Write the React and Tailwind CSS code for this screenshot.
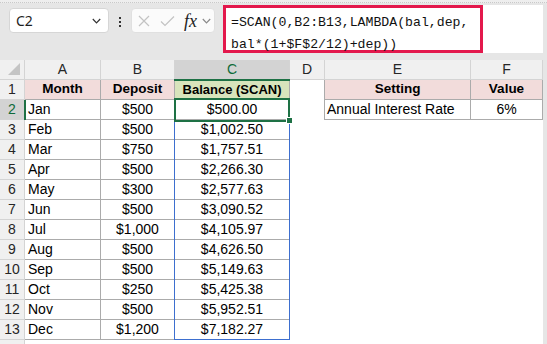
import React from "react";

const rows = [
  ["Jan", "$500", "$500.00"],
  ["Feb", "$500", "$1,002.50"],
  ["Mar", "$750", "$1,757.51"],
  ["Apr", "$500", "$2,266.30"],
  ["May", "$300", "$2,577.63"],
  ["Jun", "$500", "$3,090.52"],
  ["Jul", "$1,000", "$4,105.97"],
  ["Aug", "$500", "$4,626.50"],
  ["Sep", "$500", "$5,149.63"],
  ["Oct", "$250", "$5,425.38"],
  ["Nov", "$500", "$5,952.51"],
  ["Dec", "$1,200", "$7,182.27"],
];

function Chevron({ className }) {
  return (
    <svg width="9" height="6" viewBox="0 0 9 6" className={className}>
      <path d="M0.8 1 L4.5 4.8 L8.2 1" fill="none" stroke="currentColor" strokeWidth="1.2" />
    </svg>
  );
}

function ColHead({ label, sel }) {
  return (
    <div
      className={
        "h-[20px] border-r border-b border-[#d4d4d4] flex items-center justify-center text-[14px] " +
        (sel ? "bg-[#d3d3d3] text-[#0f6b3a]" : "bg-[#f0f0f0] text-[#262626]")
      }
    >
      {label}
    </div>
  );
}

function RowHead({ n, sel }) {
  return (
    <div
      className={
        "h-[20px] border-r border-b border-[#d4d4d4] flex items-center justify-center text-[14px] " +
        (sel ? "bg-[#d3d3d3] text-[#0f6b3a]" : "bg-[#f0f0f0] text-[#262626]")
      }
    >
      {n}
    </div>
  );
}

function Cell({ children, className = "", border = true }) {
  return (
    <div
      className={
        "h-[20px] border-r border-b flex items-center text-black whitespace-nowrap overflow-hidden " +
        (border ? "border-[#ababab] " : "border-transparent ") +
        className
      }
    >
      {children}
    </div>
  );
}

const head = "bg-[#f2dcdb] justify-center font-bold text-[13.5px] text-[#111827]";

export default function App() {
  return (
    <div
      className="w-[547px] h-[344px] overflow-hidden bg-[#e6e6e6] relative text-[14px]"
      style={{ fontFamily: '"Liberation Sans", Arial, sans-serif' }}
    >
      {/* top strip */}
      <div className="h-[3px] bg-[#eeeeee] border-b border-dotted border-[#c9c9c9]" />
      {/* formula bar */}
      <div className="h-[52px] flex items-start">
        <div className="ml-[9px] mt-[5px] w-[100px] h-[25px] bg-white border border-[#d6d6d6] rounded-[4px] flex items-center justify-between pl-[6px] pr-[7px]">
          <span className="text-[14px] text-[#1f1f1f]" style={{ fontFamily: '"Noto Sans", sans-serif' }}>C2</span>
          <Chevron className="text-[#333]" />
        </div>
        <div className="w-[22px] mt-[14px] flex flex-col items-center gap-[2px]">
          <span className="block w-[2px] h-[2px] bg-[#333]" />
          <span className="block w-[2px] h-[2px] bg-[#333]" />
          <span className="block w-[2px] h-[2px] bg-[#333]" />
        </div>
        <div className="mt-[5px] w-[84px] h-[25px] bg-[#fbfbfb] border border-[#e0e0e0] rounded-[4px] flex items-center pl-[6px]">
          <svg width="12" height="12" viewBox="0 0 12 12" className="text-[#c3c3c3]">
            <path d="M1 1 L11 11 M11 1 L1 11" stroke="currentColor" strokeWidth="1.2" fill="none" />
          </svg>
          <svg width="15" height="12" viewBox="0 0 15 12" className="ml-[10px] text-[#c3c3c3]">
            <path d="M1 6.5 L5 10.5 L14 1.5" stroke="currentColor" strokeWidth="1.2" fill="none" />
          </svg>
          <span
            className="ml-[9px] italic text-[18px] leading-none text-[#222]"
            style={{ fontFamily: '"Liberation Serif", "DejaVu Serif", serif' }}
          >
            fx
          </span>
          <Chevron className="ml-[5px] text-[#8a8a8a]" />
        </div>
        <div className="ml-[8px] mt-[2px] w-[320px] h-[48px] bg-white flex">
          <div
            className="w-[260px] h-[48px] border-[3px] border-[#e3184c] pl-[5px] pt-[4px] text-[13.2px] leading-[22px] text-[#111]"
            style={{ fontFamily: '"Liberation Mono", "DejaVu Sans Mono", monospace' }}
          >
            <div>=SCAN(0,B2:B13,LAMBDA(bal,dep,</div>
            <div>bal*(1+$F$2/12)+dep))</div>
          </div>
        </div>
      </div>
      <div className="h-[5px]" />
      {/* grid */}
      <div className="relative">
        <div className="grid grid-cols-[25px_76px_74px_115px_35px_146px_72px_4px]">
          {/* header row */}
          <div className="h-[20px] bg-[#f0f0f0] border-r border-b border-[#d4d4d4] relative">
            <svg width="14" height="14" viewBox="0 0 14 14" className="absolute right-[3px] bottom-[3px]">
              <path d="M13 1 L13 13 L1 13 Z" fill="#c4c4c4" />
            </svg>
          </div>
          <ColHead label="A" />
          <ColHead label="B" />
          <ColHead label="C" sel />
          <ColHead label="D" />
          <ColHead label="E" />
          <ColHead label="F" />
          <div className="h-[20px] bg-[#e6e6e6]" />

          {/* row 1 */}
          <RowHead n={1} />
          <Cell className={head}>Month</Cell>
          <Cell className={head}>Deposit</Cell>
          <Cell className="bg-[#d8e4bc] justify-center font-bold text-[13px] text-[#111827]">Balance (SCAN)</Cell>
          <div className="h-[20px] bg-white border-r border-[#ababab]" />
          <Cell className={head}>Setting</Cell>
          <Cell className={head}>Value</Cell>
          <div className="h-[20px] bg-[#e6e6e6]" />

          {rows.map((r, i) => {
            const n = i + 2;
            return (
              <React.Fragment key={n}>
                <RowHead n={n} sel={n === 2} />
                <Cell className="bg-white pl-[3px]">{r[0]}</Cell>
                <Cell className="bg-white justify-center">{r[1]}</Cell>
                <Cell className="bg-white justify-center">{r[2]}</Cell>
                {n === 2 ? (
                  <>
                    <div className="h-[20px] bg-white border-r border-[#ababab]" />
                    <Cell className="bg-white pl-[2px]">Annual Interest Rate</Cell>
                    <Cell className="bg-white justify-center">6%</Cell>
                  </>
                ) : (
                  <>
                    <div className="h-[20px] bg-white" />
                    <div className="h-[20px] bg-white" />
                    <div className="h-[20px] bg-white" />
                  </>
                )}
                <div className="h-[20px] bg-[#e6e6e6]" />
              </React.Fragment>
            );
          })}

          {/* partial row 14 */}
          <div className="h-[4px] bg-[#f0f0f0] border-r border-[#d4d4d4]" />
          <div className="h-[4px] bg-white" />
          <div className="h-[4px] bg-white" />
          <div className="h-[4px] bg-white" />
          <div className="h-[4px] bg-white" />
          <div className="h-[4px] bg-white" />
          <div className="h-[4px] bg-white" />
          <div className="h-[4px] bg-[#e6e6e6]" />
        </div>

        {/* spill range border */}
        <div className="absolute left-[174px] top-[39px] w-[116px] h-[241px] border border-[#3d6fcf] pointer-events-none" />
        {/* selection */}
        <div className="absolute left-[174px] top-[38px] w-[116px] h-[24px] border-2 border-[#1e7145] pointer-events-none" />
        <div className="absolute left-[286px] top-[57px] w-[7px] h-[7px] bg-[#1e7145] border border-white" />
        {/* header highlights */}
        <div className="absolute left-[174px] top-[19px] w-[116px] h-[2px] bg-[#1e7145]" />
        <div className="absolute left-[24px] top-[40px] w-[2px] h-[20px] bg-[#1e7145]" />
      </div>
    </div>
  );
}
